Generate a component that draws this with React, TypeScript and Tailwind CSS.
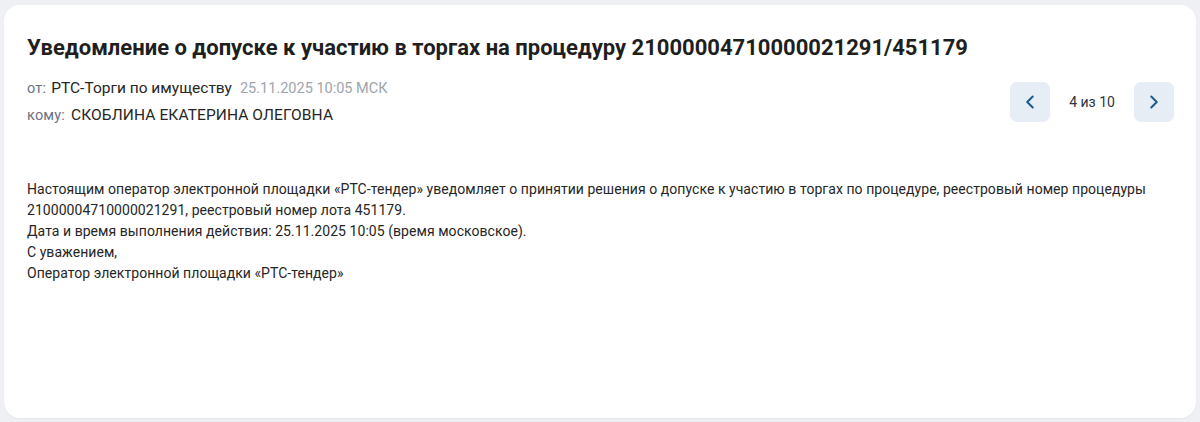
import { ChevronLeft, ChevronRight } from 'lucide-react'

export default function App() {
  return (
    <div className="min-h-[422px] bg-[#eef0f3] p-[4px] pt-[5px] font-['Roboto',sans-serif]">
      <div className="h-[413px] rounded-2xl bg-white pl-[23px] pr-[22px] pt-[29px] shadow-[0_1px_2px_rgba(0,0,0,0.04)]">
        <h1 className="text-[22px] font-bold leading-[28px] text-[#1f1f1f]">
          Уведомление о допуске к участию в торгах на процедуру 21000004710000021291/451179
        </h1>

        <div className="mt-[13px] flex items-center justify-between">
          <div className="leading-[26px]">
            <div className="flex items-baseline">
              <span className="text-[14.5px] font-normal tracking-[0.2px] text-[#6b7280]">от:</span>
              <span className="ml-[5px] text-[15.5px] text-[#262626]">РТС-Торги по имуществу</span>
              <span className="ml-[8px] text-[14.5px] text-[#a0a4ab]">25.11.2025 10:05 МСК</span>
            </div>
            <div className="flex items-baseline">
              <span className="text-[14.5px] font-normal tracking-[0.2px] text-[#6b7280]">кому:</span>
              <span className="ml-[6px] text-[15.5px] tracking-[0.1px] text-[#262626]">СКОБЛИНА ЕКАТЕРИНА ОЛЕГОВНА</span>
            </div>
          </div>

          <div className="flex items-center">
            <button className="flex h-[40px] w-[40px] items-center justify-center rounded-[7px] bg-[#e6edf5] text-[#1b5a8e]">
              <ChevronLeft size={22} strokeWidth={2.2} />
            </button>
            <span className="w-[84px] text-center text-[14px] text-[#2b3440]">4 из 10</span>
            <button className="flex h-[40px] w-[40px] items-center justify-center rounded-[7px] bg-[#e6edf5] text-[#1b5a8e]">
              <ChevronRight size={22} strokeWidth={2.2} />
            </button>
          </div>
        </div>

        <div className="mt-[50px] text-[14px] leading-[21px] tracking-[0.05px] text-[#262626]">
          <p>
            Настоящим оператор электронной площадки «РТС-тендер» уведомляет о принятии решения о допуске к участию в торгах по процедуре, реестровый номер процедуры 21000004710000021291, реестровый номер лота 451179.
          </p>
          <p>Дата и время выполнения действия: 25.11.2025 10:05 (время московское).</p>
          <p>С уважением,</p>
          <p>Оператор электронной площадки «РТС-тендер»</p>
        </div>
      </div>
    </div>
  )
}
